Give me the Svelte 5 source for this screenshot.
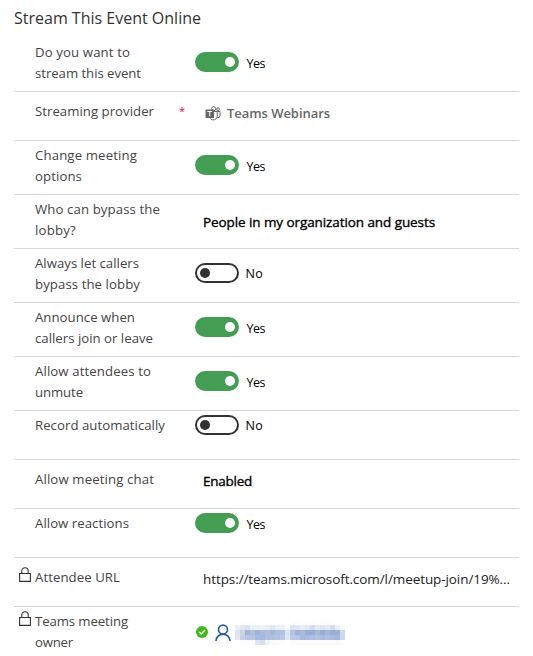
<script>
  const rows = [
    { kind: 'toggle', on: true, lines: [['Do you want to', 95], ['stream this event', 106]] },
    { kind: 'provider', short: true, low: true, required: true, lines: [['Streaming provider', 119]] },
    { kind: 'toggle', on: true, lines: [['Change meeting', 102], ['options', 47]] },
    { kind: 'value', strong: true, text: 'People in my organization and guests', width: 232, lines: [['Who can bypass the', 125], ['lobby?', 41]] },
    { kind: 'toggle', on: false, lines: [['Always let callers', 104], ['bypass the lobby', 105]] },
    { kind: 'toggle', on: true, lines: [['Announce when', 100], ['callers join or leave', 118]] },
    { kind: 'toggle', on: true, lines: [['Allow attendees to', 116], ['unmute', 48]] },
    { kind: 'toggle', on: false, short: true, lines: [['Record automatically', 130]] },
    { kind: 'value', strong: true, short: true, low: true, text: 'Enabled', width: 49, lines: [['Allow meeting chat', 119]] },
    { kind: 'toggle', on: true, short: true, lines: [['Allow reactions', 94]] },
    { kind: 'value', short: true, low: true, locked: true, text: 'https://teams.microsoft.com/l/meetup-join/19%...', width: 307, lines: [['Attendee URL', 85]] },
    { kind: 'owner', locked: true, lines: [['Teams meeting', 93], ['owner', 38]] }
  ];

  // Redacted owner name, one colour per 5px cell
  const mosaic = [
    '#fff #fdfdfe #fcfdfe #fdfdfe #fff #fff #fff #fff #fff #fff #fff #fbfcfe #fcfdfe #fff #fdfdfe #fcfdfe #fff #fdfdfe #fbfcfe #fff #fff #fff',
    '#eceff6 #e5e9f3 #dfe4f0 #ecf0f8 #eef1f8 #f0f3fa #e8edf7 #e2e8f3 #ebeff7 #eef1f8 #fbfcfe #dde3f0 #dfe5f2 #e8edf7 #e3e8f3 #d5ddec #e5eaf5 #dfe5f2 #e5eaf5 #d5ddec #ebeff7 #f6f8fc',
    '#dfe3ef #c8d2e8 #a0b4da #b0c0e0 #9fb4da #a9bbde #b0bfde #a5b8dd #b0c0e0 #b0c2e2 #dce5f2 #b5c1de #9db1da #a9bade #98add8 #98add8 #a6b8dd #98add8 #a3b6dc #98add8 #9db2da #cad9ec',
    '#e3e6f0 #c5d1e8 #b9c5e0 #b9c6e2 #a9bbde #a5b8dd #b0bfde #b0bfdf #b3c2e0 #b8c7e3 #dfe7f3 #bcc7e1 #b9c6e2 #a9bade #aabbdd #b0bfdf #b5c3e1 #aabbdd #b0bfdf #a9bade #a3b6dc #cad9ec',
    '#fff #fcfdfe #fbfcfe #fcfdfe #dfe5f2 #d9e0ef #f0f3f9 #f9fafd #fafbfd #fbfcfe #fff #fafbfd #fafbfd #fafbfd #fafbfd #fafbfd #fafbfd #fafbfd #fafbfd #fafbfd #f9fafd #fcfdfe'
  ].map((row) => row.split(' '));

  // Tracks a run of text out to the given width
  function track(node, width) {
    const natural = node.getBoundingClientRect().width;
    node.style.letterSpacing = `${(width - natural) / node.textContent.length}px`;
  }
</script>

<section>
  <h2><span use:track={187}>Stream This Event Online</span></h2>
  {#each rows as row}
    <div class="row" class:short={row.short} class:low={row.low}>
      <div class="lock">
        {#if row.locked}
          <svg width="12" height="15" viewBox="0 0 12 15" fill="none" stroke="#333" stroke-width="1.1"><path d="M.6 6.5h10.8v7.9H.6zM2.8 6.5V4a3.2 3.2 0 0 1 6.4 0v2.5" /></svg>
        {/if}
      </div>
      <div class="label">
        {#each row.lines as [text, width]}
          <div><span use:track={width}>{text}</span></div>
        {/each}
      </div>
      <div class="required">{row.required ? '*' : ''}</div>
      <div class="field {row.kind}">
        {#if row.kind === 'toggle'}
          <span class="switch" class:on={row.on}><i></i></span>
          <span class="state" class:no={!row.on}><span use:track={row.on ? 18.5 : 17.5}>{row.on ? 'Yes' : 'No'}</span></span>
        {:else if row.kind === 'value'}
          <span class="text" class:strong={row.strong} use:track={row.width}>{row.text}</span>
        {:else if row.kind === 'provider'}
          <svg width="16" height="15" viewBox="0 0 16 15" fill="none" stroke="#666">
            <circle cx="8.7" cy="2.7" r="2" /><circle cx="13" cy="3.2" r="1.4" />
            <path d="M9 5.5h3.3v4.7a3.8 3.8 0 0 1-7 2M12.3 5.5h2.8v3.8a2.5 2.5 0 0 1-2.8 2.4" />
            <path d="M.5 3.5h8.5v8.5H.5z" fill="#666" stroke="none" />
            <path d="M2.3 5.5h4.8M4.7 5.5v4.8" stroke="#fff" />
          </svg>
          <span use:track={103}>Teams Webinars</span>
        {:else}
          <svg width="12" height="12" viewBox="0 0 12 12"><circle cx="6" cy="6" r="6" fill="#42b81c" /><path d="m3.2 6 2 2 3.6-3.7" fill="none" stroke="#fff" stroke-width="1.5" /></svg>
          <svg class="person" width="16" height="18" viewBox="0 0 16 18" fill="none" stroke="#2459b2" stroke-width="1.6"><circle cx="8" cy="5.6" r="4.5" /><path d="M1 17a7 6.8 0 0 1 14 0" /></svg>
          <svg width="110" height="25" shape-rendering="crispEdges">
            {#each mosaic as cells, y}
              {#each cells as fill, x}
                <rect x={x * 5} y={y * 5} width="5" height="5" {fill} />
              {/each}
            {/each}
          </svg>
        {/if}
      </div>
    </div>
  {/each}
</section>

<style>
  :global(body) { background: #fff; overflow: hidden; }
  section {
    box-sizing: border-box;
    width: 533px;
    height: 656px;
    padding: 0 14px;
    overflow: hidden;
    font: 13.2px/21px "Open Sans", "Noto Sans", sans-serif;
    color: #444;
    white-space: nowrap;
  }
  h2 { margin: 0; height: 38px; font-size: 16px; font-weight: 400; line-height: 36px; color: #333; }
  .row { display: flex; box-sizing: border-box; height: 54px; border-bottom: 1px solid #d6d6d6; }
  .row.short { height: 49px; }
  .row:last-child { border: 0; }
  .lock { width: 21px; padding: 4px 0 0 5px; box-sizing: border-box; }
  .lock svg { display: block; }
  .low .lock { padding-top: 9px; }
  .label { width: 144px; padding-top: 4px; }
  .low .label { padding-top: 9px; }
  .required { width: 16px; padding-top: 8px; color: #e00b1c; font-size: 11px; }
  .field { display: flex; height: 20px; padding-top: 14px; align-items: center; color: #000; }
  .short .field { padding-top: 4px; }
  .switch { box-sizing: border-box; width: 44px; height: 20px; padding: 3px; border: 2px solid #333; border-radius: 10px; display: flex; }
  .switch i { width: 10px; height: 10px; border-radius: 50%; background: #333; }
  .switch.on { justify-content: flex-end; border-color: #439e54; background: #439e54; padding-right: 2px; }
  .on i { background: #fff; }
  .state { padding: 3px 0 0 7.5px; font-size: 12.5px; }
  .state.no { padding: 1px 0 0 6.5px; }
  .value { padding: 17px 0 0 8px; color: #222; font-size: 13.5px; }
  .short .value { padding-top: 11px; }
  .strong { color: #000; -webkit-text-stroke: 0.35px #000; }
  .provider { color: #666; font-weight: 600; padding-left: 10px; gap: 6px; font-size: 13px; }
  .short .provider { padding-top: 11px; }
  .owner { padding: 15px 0 0 1px; }
  .person { margin: 1px 4px 0 7px; }
</style>
